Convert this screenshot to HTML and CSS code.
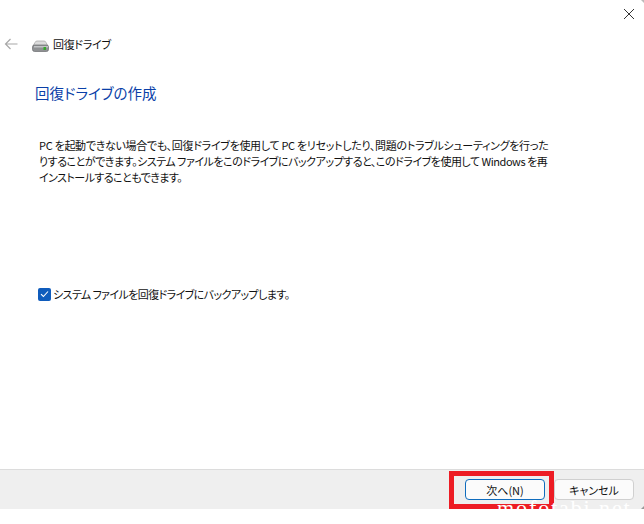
FILE: index.html
```html
<!DOCTYPE html>
<html lang="ja">
<head>
<meta charset="utf-8">
<title>回復ドライブ</title>
<link rel="stylesheet" href="styles.css">
</head>
<body>
<div class="dialog">
  <span class="corner corner-top"></span>
  <div class="close-row">
    <svg class="close-icon" width="12" height="12" viewBox="0 0 12 12"><path d="M1 1L11 11M11 1L1 11" stroke="#333" stroke-width="1" fill="none"/></svg>
  </div>
  <div class="nav-row">
    <svg class="back-icon" width="14" height="12" viewBox="0 0 14 12"><path d="M13.5 6H1.5M6.5 1L1.5 6L6.5 11" stroke="#a8a8a8" stroke-width="1.2" fill="none"/></svg>
    <svg class="drive-icon" width="17" height="12" viewBox="0 0 17 12">
      <path d="M3 2.5Q3.5 1 5 1H12Q13.5 1 14 2.5L16 6H1Z" fill="#dcdcdc" stroke="#a0a0a0" stroke-width="0.7"/>
      <rect x="0.5" y="5" width="16" height="6.5" rx="2" fill="#8f9193" stroke="#6b6d70" stroke-width="0.7"/>
      <rect x="2" y="6" width="14" height="1.5" fill="#c2c4c6"/>
      <rect x="11.5" y="7" width="2.5" height="3" fill="#35a82c"/>
    </svg>
    <span class="nav-title">回復ドライブ</span>
  </div>
  <main class="content">
    <h1 class="heading">回復ドライブの作成</h1>
    <p class="body-text"><span class="line line-one">PC を起動できない場合でも、回復ドライブを使用して PC をリセットしたり、問題のトラブルシューティングを行った</span><span class="line line-two">りすることができます。システム ファイルをこのドライブにバックアップすると、このドライブを使用して Windows を再</span><span class="line line-three">インストールすることもできます。</span></p>
    <label class="check-row">
      <span class="checkbox"><svg width="9" height="8" viewBox="0 0 9 8"><path d="M1 4.2L3.4 6.5L8 1.5" stroke="#fff" stroke-width="1.1" fill="none"/></svg></span>
      <span class="check-label">システム ファイルを回復ドライブにバックアップします。</span>
    </label>
  </main>
  <footer class="footer">
    <button class="btn btn-primary">次へ(N)</button>
    <button class="btn">キャンセル</button>
    <span class="highlight"></span>
    <span class="watermark">mofotabi.net</span>
    <span class="corner corner-bottom"></span>
  </footer>
</div>
</body>
</html>
```
FILE: styles.css
```css
html, body { margin: 0; padding: 0; background: #fff; }
body { width: 644px; height: 524px; overflow: hidden; font-family: "Noto Sans CJK JP", "Noto Sans", sans-serif; font-feature-settings: "palt"; color: #111; }
.dialog { display: flex; flex-direction: column; height: 509px; position: relative; }
.close-row { display: flex; justify-content: flex-end; height: 29px; padding: 8px 9px 0 0; box-sizing: border-box; }
.nav-row { display: flex; align-items: center; height: 30px; padding-left: 4px; }
.back-icon { margin-right: 14px; }
.drive-icon { margin-right: 4px; margin-top: 3px; }
.nav-title { font-size: 11px; line-height: 16px; margin-top: -1px; letter-spacing: -0.3px; }
.content { flex: 1; padding: 0 35px; }
.heading { margin: 23px 0 0; font-size: 14.5px; font-weight: 400; color: #0a3fa8; line-height: 22px; }
.body-text { margin: 33px 0 0; padding-left: 4px; white-space: nowrap; font-size: 11px; line-height: 16px; }
.line { display: block; }
.line-one { letter-spacing: -0.3px; }
.line-two { letter-spacing: -0.47px; }
.line-three { letter-spacing: -0.55px; }
.check-row { display: flex; align-items: center; margin-top: 101px; padding-left: 3px; }
.checkbox { display: flex; align-items: center; justify-content: center; width: 13px; height: 13px; border-radius: 2px; background: #0f5cbc; margin-right: 2px; }
.check-label { font-size: 11px; letter-spacing: -0.6px; }
.footer { display: flex; justify-content: flex-end; align-items: center; gap: 9px; height: 40px; box-sizing: border-box; padding: 0 10px 0 0; background: #efefef; border-top: 1px solid #dcdcdc; position: relative; }
.btn { width: 80px; height: 21px; padding: 0; font: 11px "Noto Sans CJK JP", sans-serif; font-feature-settings: "palt"; color: #111; background: #fbfbfb; border: 1px solid #d0d0d0; border-radius: 4px; }
.btn-primary { border-color: #0f6cbd; }
.highlight { position: absolute; left: 449px; top: 1px; width: 105px; height: 38px; box-sizing: border-box; border: 5px solid #ed1c24; }
.watermark { position: absolute; left: 497px; top: 30px; font: 22px/16px "Liberation Serif", serif; color: #fff; letter-spacing: 1.9px; }
.corner { position: absolute; right: 0; width: 0; height: 0; border-style: solid; }
.corner-top { top: 0; border-width: 3px 0 0 3px; border-color: #bbb transparent transparent transparent; }
.corner-bottom { bottom: 0; border-width: 0 0 3px 3px; border-color: transparent transparent #999 transparent; }
```
